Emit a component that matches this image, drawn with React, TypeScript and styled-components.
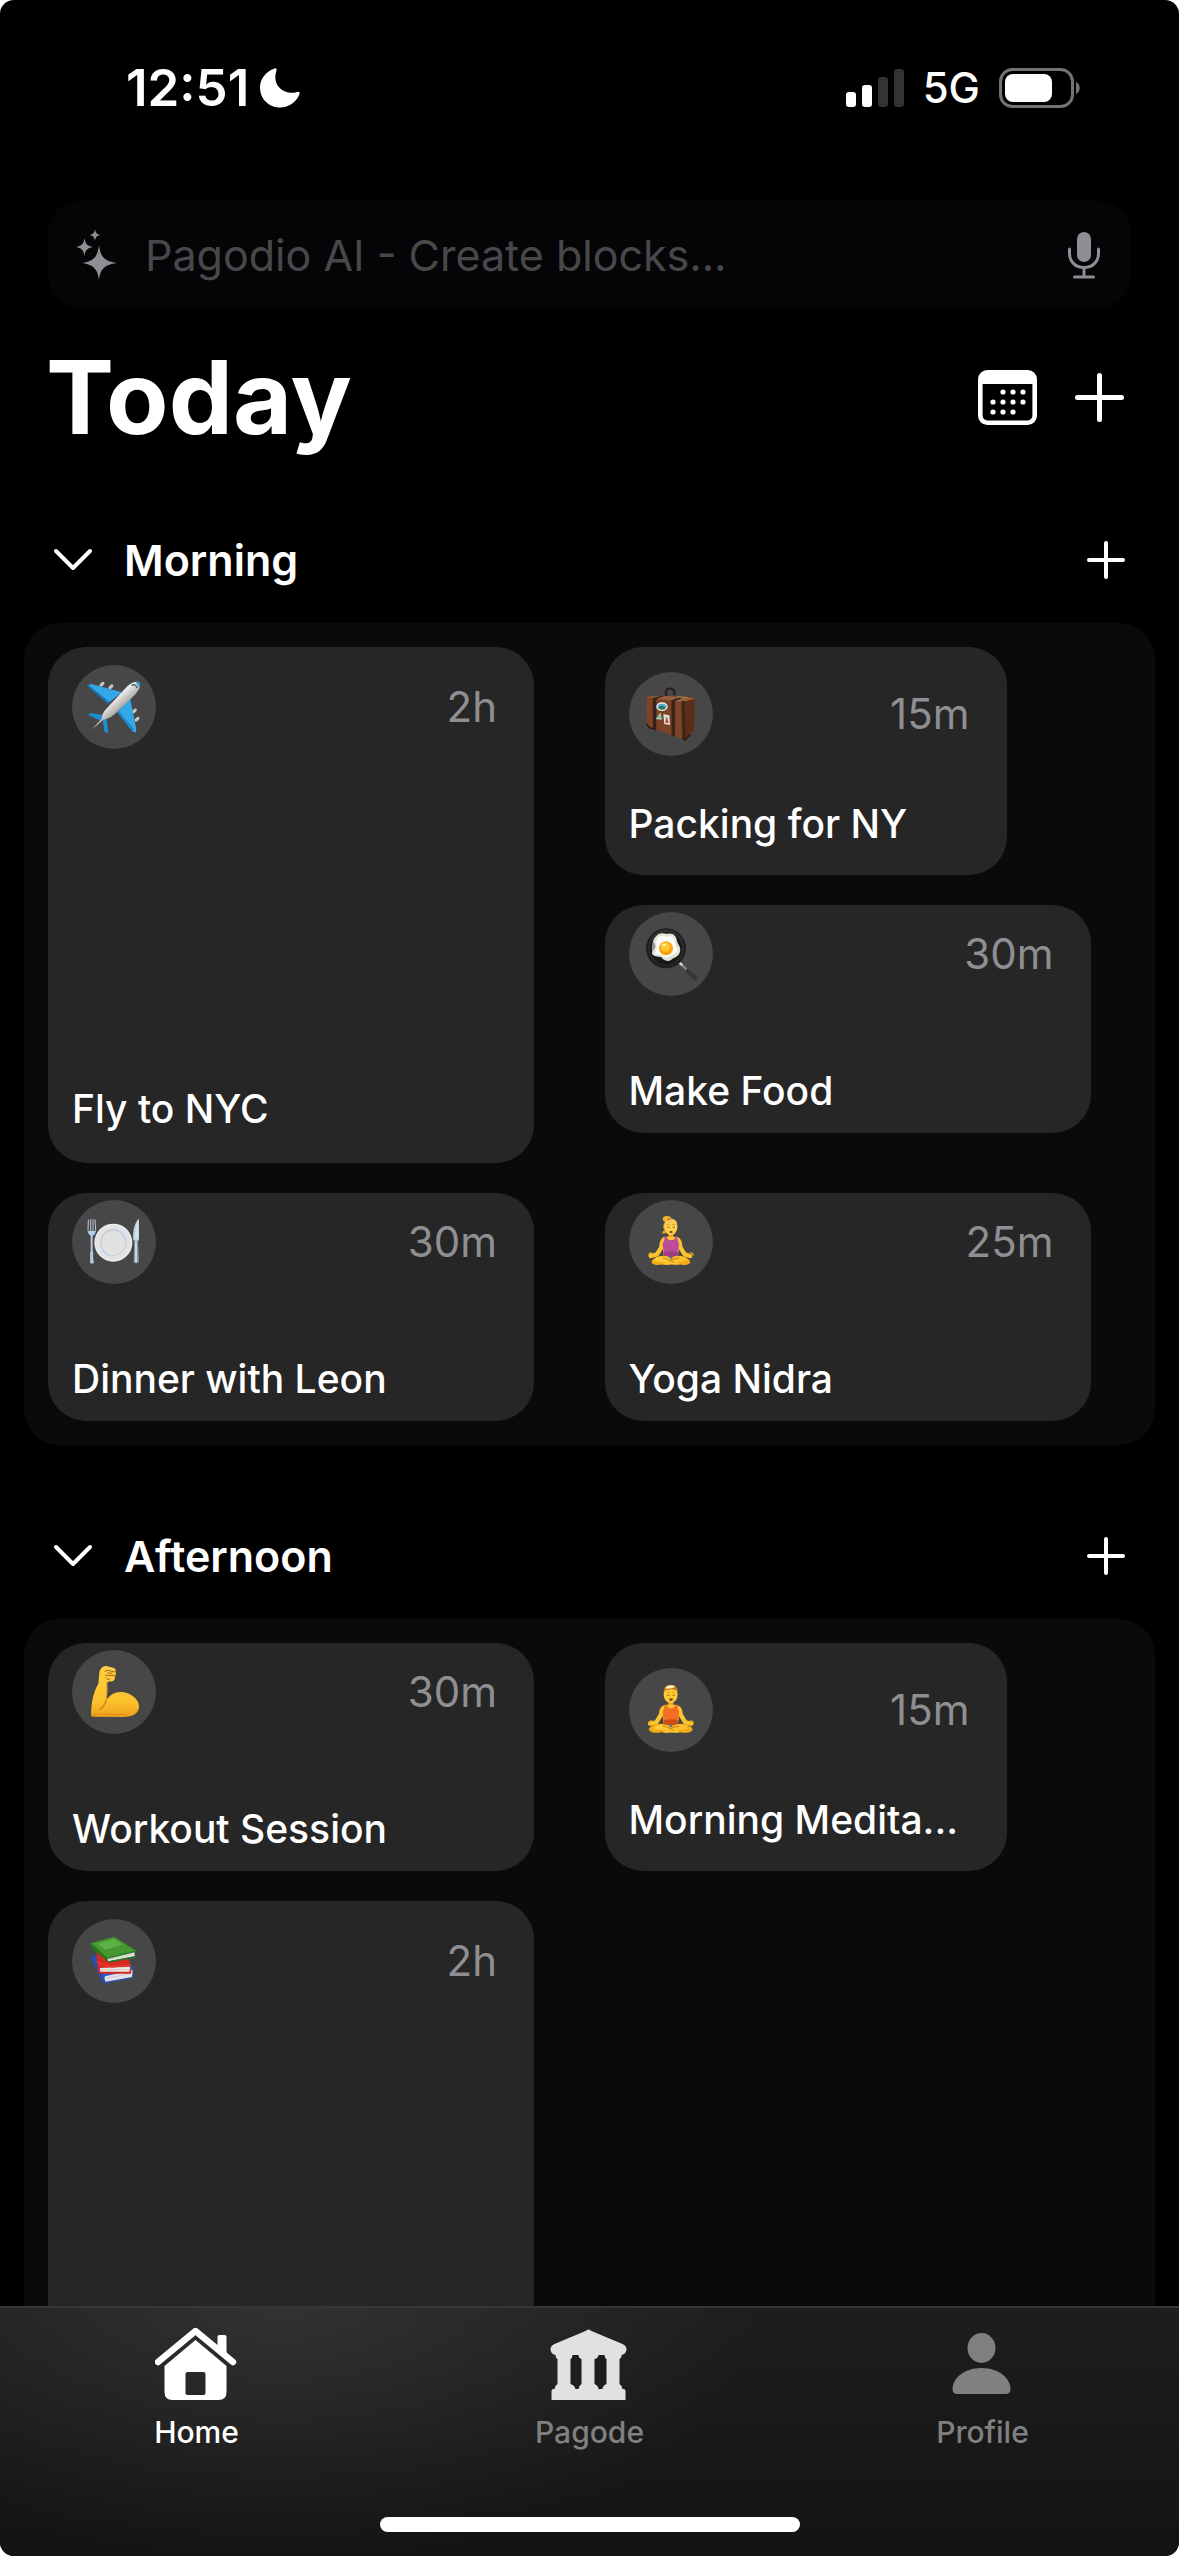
import React from "react";
import styled, { createGlobalStyle } from "styled-components";

const GlobalStyle = createGlobalStyle`
  *, *::before, *::after { box-sizing: border-box; }
  html, body { margin: 0; background: #fff; }
  body, button, input {
    font-family: Inter, "Liberation Sans", sans-serif;
    color: #fff;
  }
  h1, h2, h3, p { margin: 0; }
  button { padding: 0; border: 0; background: none; cursor: pointer; }
  svg { display: block; flex: none; }
`;

const Screen = styled.div`
  height: 100vh;
  display: flex;
  flex-direction: column;
  overflow: hidden;
  border-radius: 14px;
  background: #000;
`;

const StatusBar = styled.div`
  flex: none;
  height: 176px;
  padding: 0 98px 0 126px;
  display: flex;
  align-items: center;
  justify-content: space-between;
`;

const StatusGroup = styled.div<{ $gap: number }>`
  display: flex;
  align-items: center;
  gap: ${(p) => p.$gap}px;
`;

const Clock = styled.span`
  font-size: 51px;
  font-weight: 600;
  line-height: 60px;
`;

const Network = styled.span`
  font-size: 42px;
  font-weight: 500;
  line-height: 60px;
`;

const Content = styled.main`
  flex: 1;
  min-height: 0;
  overflow: auto;
  padding: 25px 24px 24px;
  scrollbar-width: none;
`;

const SearchField = styled.label`
  display: flex;
  align-items: center;
  height: 107px;
  margin: 0 24px;
  padding: 0 31px 0 27px;
  border-radius: 32px;
  background: #050507;
`;

const SearchInput = styled.input`
  flex: 1;
  min-width: 0;
  margin: 0 30px 0 26px;
  padding: 0;
  border: 0;
  outline: 0;
  background: none;
  font-size: 43px;
  line-height: 60px;
  &::placeholder { color: #48484a; opacity: 1; }
`;

const PageHeader = styled.header`
  display: flex;
  align-items: center;
  justify-content: space-between;
  height: 178px;
  margin-bottom: 11px;
  padding: 0 31px 0 22px;
`;

const PageTitle = styled.h1`
  font-size: 102px;
  font-weight: 700;
  line-height: 120px;
`;

const HeaderActions = styled.div`
  display: flex;
  align-items: center;
  gap: 38px;
`;

const Section = styled.section`
  & + & { margin-top: 48px; }
`;

const SectionHeader = styled.div`
  display: flex;
  align-items: center;
  justify-content: space-between;
  height: 126px;
  padding: 0 30px 0 28px;
`;

const SectionToggle = styled.button`
  display: flex;
  align-items: center;
  gap: 30px;
`;

const SectionTitle = styled.h2`
  font-size: 43px;
  font-weight: 600;
  line-height: 60px;
`;

const Panel = styled.div`
  display: grid;
  grid-template-columns: 1fr 1fr;
  gap: 30px;
  padding: 24px;
  border-radius: 36px;
  background: #0a0a0a;
`;

const Stack = styled.div`
  display: flex;
  flex-direction: column;
  gap: 30px;
`;

type Size = "short" | "medium" | "long";

const cardWidth = { short: 402, medium: 486, long: 486 };
const cardHeight = { short: 228, medium: 228, long: 516 };
const cardPadding = {
  short: "25px 37px 27px 24px",
  medium: "7px 37px 18px 24px",
  long: "18px 37px 30px 24px",
};

const Card = styled.article<{ $size: Size }>`
  display: flex;
  flex-direction: column;
  justify-content: space-between;
  width: 100%;
  max-width: ${(p) => cardWidth[p.$size]}px;
  height: ${(p) => cardHeight[p.$size]}px;
  padding: ${(p) => cardPadding[p.$size]};
  border-radius: 38px;
  background: #262626;
`;

const CardTop = styled.div`
  display: flex;
  align-items: center;
  justify-content: space-between;
`;

const Badge = styled.div`
  width: 84px;
  height: 84px;
  border-radius: 50%;
  background: #474747;
`;

const Duration = styled.span`
  font-size: 42px;
  line-height: 48px;
  color: #8e8e93;
`;

const CardTitle = styled.h3`
  font-size: 39px;
  font-weight: 500;
  line-height: 48px;
  white-space: nowrap;
`;

const TabBar = styled.nav`
  flex: none;
  display: flex;
  flex-direction: column;
  align-items: center;
  height: 250px;
  border-top: 2px solid #363636;
  background:
    radial-gradient(ellipse 480px 260px at 24% 0, rgba(255, 255, 255, 0.09), rgba(255, 255, 255, 0)),
    linear-gradient(#1e1e1e, #131313);
`;

const Tabs = styled.div`
  display: grid;
  grid-template-columns: repeat(3, 1fr);
  width: 100%;
`;

const Tab = styled.a<{ $active?: boolean }>`
  display: flex;
  flex-direction: column;
  align-items: center;
  gap: 10px;
  padding-top: 16px;
  font-size: 30px;
  font-weight: 500;
  line-height: 36px;
  text-decoration: none;
  color: ${(p) => (p.$active ? "#fff" : "#808080")};
`;

const HomeIndicator = styled.div`
  width: 420px;
  height: 15px;
  margin: auto 0 24px;
  border-radius: 8px;
  background: #fff;
`;

const Moon = () => (
  <svg width="42" height="42" viewBox="0 0 42 42" fill="#fff">
    <path d="M15.500 1.500C17 .8 18 2 17.500 3.400C15.500 8.500 15.800 16 20.500 20.800C25 25.500 32 27 38 25C39.800 24.400 41.200 25.300 40.500 27C37.500 35 30 40.500 21 40.500C10 40.500 1 32 1 20.500C1 12 7 4.500 15.500 1.500Z" />
  </svg>
);

const Signal = () => (
  <svg width="58" height="38" viewBox="0 0 58 38" fill="#fff">
    <rect x="0" y="23" width="10" height="15" rx="3" />
    <rect x="16" y="16" width="10" height="22" rx="3" />
    <g fill="#333">
      <rect x="32" y="8" width="10" height="30" rx="3" />
      <rect x="48" y="0" width="10" height="38" rx="3" />
    </g>
  </svg>
);

const Battery = () => (
  <svg width="82" height="40" viewBox="0 0 82 40">
    <rect x="1.500" y="1.500" width="72" height="37" rx="12" fill="none" stroke="#737373" strokeWidth="3" />
    <rect x="6" y="6" width="47" height="28" rx="8" fill="#fff" />
    <path d="M77 14C82 16 82 24 77 26Z" fill="#737373" />
  </svg>
);

const Sparkles = () => (
  <svg width="44" height="52" viewBox="0 0 44 52" fill="#8e8e93">
    <path d="M24 16C25.500 28 29 32 42 34C29 36 25.500 40 24 51C22.500 40 19 36 7 34C19 32 22.500 28 24 16Z" />
    <path d="M9.500 9C10.300 15 12.500 17 18 18C12.500 19 10.300 21 9.500 27C8.700 21 6.500 19 1 18C6.500 17 8.700 15 9.500 9Z" />
    <path d="M20 0C20.600 4 22 5.400 25.500 6C22 6.600 20.600 8 20 12C19.400 8 18 6.600 14.500 6C18 5.400 19.400 4 20 0Z" />
  </svg>
);

const Mic = () => (
  <svg width="32" height="48" viewBox="0 0 32 48" fill="none" stroke="#8e8e93" strokeWidth="3" strokeLinecap="round">
    <rect x="9" y="1" width="14" height="30" rx="7" fill="#8e8e93" stroke="none" />
    <path d="M1.500 18V22C1.500 31 7.500 36.500 16 36.500C24.500 36.500 30.500 31 30.500 22V18M16 37V46M6.500 46H25.500" />
  </svg>
);

const CalendarIcon = () => (
  <svg width="59" height="55" viewBox="0 0 59 55">
    <rect x="2.300" y="2.300" width="54.400" height="50.400" rx="7" fill="none" stroke="#fff" strokeWidth="4.600" />
    <path d="M2 8Q2 1 9 1H50Q57 1 57 8V14H2Z" fill="#fff" />
    <g fill="#fff">
      {[[25, 22], [35, 22], [45, 22], [15, 32], [25, 32], [35, 32], [45, 32], [15, 42], [25, 42], [35, 42]].map(
        ([x, y]) => (
          <circle key={`${x}-${y}`} cx={x} cy={y} r="2.600" />
        ),
      )}
    </g>
  </svg>
);

const Plus = ({ size, weight }: { size: number; weight: number }) => (
  <svg width={size} height={size} viewBox={`0 0 ${size} ${size}`} stroke="#fff" strokeWidth={weight} strokeLinecap="round">
    <path d={`M${size / 2} ${weight / 2}V${size - weight / 2}M${weight / 2} ${size / 2}H${size - weight / 2}`} />
  </svg>
);

const Chevron = () => (
  <svg width="42" height="24" viewBox="0 0 42 24" fill="none" stroke="#fff" strokeWidth="4" strokeLinecap="round" strokeLinejoin="round">
    <path d="M4 3L21 20L38 3" />
  </svg>
);

const HomeIcon = () => (
  <svg width="84" height="80" viewBox="1.500 0 84 80">
    <path d="M4.500 38L42 7L79.500 38" fill="none" stroke="#fff" strokeWidth="6.500" strokeLinecap="round" strokeLinejoin="round" />
    <path d="M64 27V13Q64 11 66 11H71Q73 11 73 13V32Z" fill="#fff" />
    <path fillRule="evenodd" d="M42 16L73 42V68Q73 76 65 76H19Q11 76 11 68V42ZM34 48Q32 48 32 50V69Q32 71 34 71H50Q52 71 52 69V50Q52 48 50 48Z" fill="#fff" />
  </svg>
);

const TempleIcon = () => (
  <svg width="84" height="80" viewBox="1.500 0 84 80" fill="#e1e1e1">
    <path d="M39 7Q42 4 45 7L76 20Q80 22 80 25Q80 30 75 31V33Q74 34 73 35V60Q76 62 76 65H77Q79 65 79 67V76H5V67Q5 65 7 65H8Q8 62 11 60V35Q9 34 9 31Q4 30 4 25Q4 22 8 20Z" />
    <path d="M26 31H32Q32 34 35 35V60Q32 62 32 65H29Q28 61 24 60V35Q26 34 26 31ZM52 31H58Q58 34 60 35V60Q56 62 56 65H52Q52 62 48 60V35Q52 34 52 31Z" fill="#1d1d1d" />
  </svg>
);

const ProfileIcon = () => (
  <svg width="84" height="80" viewBox="1.500 0 84 80" fill="#808080">
    <ellipse cx="42" cy="24" rx="14" ry="15" />
    <path d="M42 44C60 44 71 55 71 65Q71 70 66 70H18Q13 70 13 65C13 55 24 44 42 44Z" />
  </svg>
);

const Plane = () => (
  <svg viewBox="0 0 252 252">
    <defs>
      <linearGradient id="fuselage" gradientUnits="userSpaceOnUse" x1="125" y1="85" x2="158" y2="122">
        <stop offset="0.200" stopColor="#f7f7f7" />
        <stop offset="1" stopColor="#a9a4a2" />
      </linearGradient>
    </defs>
    <g fill="#c9c6c4">
      <ellipse cx="90" cy="58" rx="9" ry="5" transform="rotate(-42 90 58)" />
      <ellipse cx="117" cy="65" rx="9" ry="5" transform="rotate(-42 117 65)" />
      <ellipse cx="187" cy="138" rx="9" ry="5" transform="rotate(-42 187 138)" />
      <ellipse cx="195" cy="163" rx="9" ry="5" transform="rotate(-42 195 163)" />
    </g>
    <path d="M48 60L58 57L150 82L112 112Z" fill="#35a7e8" />
    <path d="M48 60L112 112L108 117L46 63Z" fill="#1177bd" />
    <path d="M174 98L193 192L191 203L181 199L136 142Z" fill="#35a7e8" />
    <path d="M181 199L136 142L141 138L185 192Z" fill="#1b86cc" />
    <path d="M48 149L56 144L96 151L86 167Z" fill="#1b8fd5" />
    <path d="M92 166L103 157L109 200L104 204L98 201Z" fill="#1b8fd5" />
    <path d="M59 194L90 160C90 146 98 136 108 126L166 64C178 52 198 46 203 54C207 62 200 78 188 90L128 148C117 157 105 163 94 164Z" fill="url(#fuselage)" />
    <path d="M191 51Q201 48 204 55Q205 62 202 67Z" fill="#1f9add" />
    <path d="M179 61Q190 55 196 69" fill="none" stroke="#4c5055" strokeWidth="4" />
  </svg>
);

const Suitcase = () => (
  <svg viewBox="0 0 252 252">
    <path d="M111 72V60Q111 50 123 50Q136 50 136 61V70" fill="none" stroke="#2d211d" strokeWidth="7" />
    <path d="M52 78Q53 72 61 71L190 76Q198 77 198 84L195 176L168 204L60 166Q53 163 53 156Z" fill="#7b4429" />
    <path d="M160 87L198 80L195 176L168 204Q163 200 163 194Z" fill="#5a2e1c" />
    <path d="M54 76Q80 70 114 72L198 79L160 91Z" fill="#96603e" />
    <path d="M71 78L82 80V174L72 170ZM127 84L138 86V194L128 190Z" fill="#3b2218" />
    <path d="M157 88L166 86L170 204L160 199Z" fill="#412418" />
    <path d="M71 78L100 71H108L82 81ZM127 85L158 75H166L138 87Z" fill="#2b211c" />
    <path d="M145 74L176 77" stroke="#b38a47" strokeWidth="3" />
    <path d="M53 155L60 166L80 173M160 199L168 204L184 188" fill="none" stroke="#34190f" strokeWidth="5" />
    <ellipse cx="99" cy="104" rx="17" ry="13" fill="#f0eee0" />
    <ellipse cx="99" cy="104" rx="13" ry="9" fill="#4ba7dc" />
    <path d="M88 108Q97 94 110 108Q99 117 88 108Z" fill="#3b7343" />
    <path d="M82 140L94 124L97 142Z" fill="#5cc6a4" stroke="#e4e3c8" strokeWidth="2" />
    <path d="M103 127L121 130L123 159L106 156Z" fill="#eee7d4" />
    <path d="M107 132L118 134L119 154L109 152Z" fill="#a3d4e5" />
    <path d="M113 135L119 153L109 152Z" fill="#cf3428" />
  </svg>
);

const Pan = () => (
  <svg viewBox="0 0 252 252">
    <path d="M150 150L181 181" stroke="#8e8586" strokeWidth="7" />
    <path d="M176 177L200 200" stroke="#39343a" strokeWidth="13" strokeLinecap="round" />
    <path d="M150 151L160 160" stroke="#e3e1e1" strokeWidth="6" />
    <circle cx="111" cy="109" r="60" fill="#1d1e1f" />
    <circle cx="111" cy="107" r="53" fill="#343636" />
    <circle cx="111" cy="109" r="49" fill="#171818" />
    <path d="M84 70C96 59 106 66 117 65C135 63 142 74 144 87C146 97 157 105 153 119C149 136 135 135 127 143C116 151 103 145 97 136C88 133 70 135 69 123C68 114 74 108 72 98C70 87 75 78 84 70Z" fill="#dfe4d6" />
    <path d="M72 86Q66 107 70 120Q76 111 80 103Z" fill="#9b9094" />
    <path d="M86 77Q98 67 113 74Q135 69 137 88Q138 103 147 111Q146 125 128 128Q113 144 98 130L77 125Q85 108 81 94Z" fill="#fcfdf8" />
    <circle cx="111" cy="109" r="21" fill="#f8a20f" />
    <circle cx="109" cy="105" r="14" fill="#ffc832" />
    <ellipse cx="105" cy="99" rx="6" ry="4" fill="#fff09a" />
  </svg>
);

const Plate = () => (
  <svg viewBox="0 0 252 252">
    <g fill="none" stroke="#bccbd8" strokeLinecap="round">
      <path d="M49 60L48 92Q50 105 59 106Q69 105 71 92L69 60M56 59V96M63 59V96" strokeWidth="3" />
      <path d="M59 104V180" strokeWidth="6" />
      <path d="M59 158V182" strokeWidth="9" />
    </g>
    <path d="M49 93H70Q69 106 60 109Q51 106 49 93Z" fill="#a9d0f0" />
    <circle cx="60" cy="185" r="6" fill="#a8c9ea" />
    <circle cx="124" cy="128" r="57" fill="#edeeef" />
    <circle cx="124" cy="128" r="53" fill="#e1e3e4" />
    <circle cx="124" cy="127" r="40" fill="#c7ced5" />
    <circle cx="124" cy="129" r="36" fill="#e2e2e2" />
    <path d="M88 137Q91 164 119 168M156 113Q150 97 136 92" fill="none" stroke="#b6d5f3" strokeWidth="4" />
    <path d="M201 57C188 66 182 91 183 118L190 127L201 121Z" fill="#b8cfdd" />
    <path d="M199 62Q190 76 188 118L198 116Z" fill="#d6e3ea" />
    <path d="M187 122H198L201 183Q200 190 192 190Q185 190 185 182Z" fill="#8297a8" />
    <path d="M192 124V187" stroke="#d3e5f3" strokeWidth="5" />
  </svg>
);

const YogaBody = ({ shirt, shade, wide }: { shirt: string; shade: string; wide?: boolean }) => (
  <g>
    <path d="M118 93H133V112H118Z" fill="#eda61c" />
    <g fill="none" stroke="#fbc42d" strokeLinecap="round" strokeLinejoin="round">
      <path d={wide ? "M106 119Q97 122 96 140L82 163L63 167" : "M107 117Q98 122 97 142L84 163L65 168"} strokeWidth="13" />
      <path d={wide ? "M145 119Q154 122 155 140L169 163L187 167" : "M144 117Q153 122 154 142L167 163L183 168"} strokeWidth="13" />
    </g>
    <path d="M106 112Q125 107 145 112L151 137L146 174H105L100 137Z" fill="#fbc42d" />
    <path d="M107 110L112 109Q115 121 126 121Q138 121 140 109L145 110Q145 124 150 130L146 172H105L101 130Q107 123 107 110Z" fill={shirt} />
    <path d="M104 157Q126 151 147 157L146 172H105Z" fill={shade} />
    <g fill="#f2aa16">
      <ellipse cx={wide ? 88 : 96} cy="181" rx="29" ry="13" transform={wide ? "rotate(-7 88 181)" : "rotate(-12 96 181)"} />
      <ellipse cx={wide ? 162 : 155} cy="181" rx="29" ry="13" transform={wide ? "rotate(7 162 181)" : "rotate(12 155 181)"} />
    </g>
    <path d="M82 172Q103 165 125 176L154 193Q129 198 108 187L74 184Z" fill="#ffca38" />
    <path d="M169 172Q147 164 126 176L98 193Q122 199 147 187L177 182Z" fill="#fcc12c" />
    <path d="M101 174Q115 175 134 187M150 174Q135 176 122 182" fill="none" stroke="#ca8114" strokeWidth="3" />
    <path d="M119 171H132L126 178Z" fill="#3b87a6" />
    <path d="M59 166Q61 158 69 159M184 159Q192 158 193 167" fill="none" stroke="#e9a51c" strokeWidth="4" />
  </g>
);

const YogaFace = () => (
  <g>
    <path d="M114 81Q118 84 122 81M130 81Q134 84 138 81" fill="none" stroke="#a16b16" strokeWidth="3" />
    <path d="M114 74L121 73M130 73L137 74" stroke="#ba811d" strokeWidth="2" />
    <ellipse cx="126" cy="96" rx="5" ry="3" fill="#77431b" />
  </g>
);

const YogaWoman = () => (
  <svg viewBox="0 0 252 252">
    <YogaBody shirt="#bc4d9a" shade="#9f3c85" />
    <ellipse cx="114" cy="57" rx="13" ry="9" fill="#efb52b" />
    <path d="M112 63Q96 79 107 91Q96 96 101 101Q114 101 119 95L132 70Z" fill="#e5a31f" />
    <ellipse cx="126" cy="81" rx="19" ry="24" fill="#ffd04a" />
    <path d="M106 82Q103 57 125 56Q148 55 145 86Q140 77 134 69Q122 78 107 82Z" fill="#f6cd52" />
    <path d="M115 60L124 56" stroke="#d94b64" strokeWidth="4" />
    <YogaFace />
  </svg>
);

const YogaMan = () => (
  <svg viewBox="0 0 252 252">
    <YogaBody shirt="#f16e24" shade="#ce4e17" wide />
    <ellipse cx="125" cy="79" rx="21" ry="26" fill="#ffc934" />
    <path d="M104 76Q101 51 125 50Q149 50 146 78L142 67Q132 65 128 62Q120 68 108 66Z" fill="#bd7d26" />
    <path d="M111 57Q123 47 139 56L129 60Q120 63 111 62Z" fill="#fff0bd" />
    <YogaFace />
    <path d="M119 94Q126 88 133 94" fill="none" stroke="#9b641a" strokeWidth="3" />
  </svg>
);

const Biceps = () => (
  <svg viewBox="0 0 252 252">
    <defs>
      <linearGradient id="skin" x1="0" y1="0" x2="0" y2="1">
        <stop offset="0" stopColor="#ffd044" />
        <stop offset="0.700" stopColor="#fcc22d" />
        <stop offset="1" stopColor="#eca11a" />
      </linearGradient>
    </defs>
    <path d="M82 68C84 56 93 47 103 48L126 54Q133 58 131 65Q134 71 130 76L128 88Q124 97 112 94L105 98Q107 127 103 151C113 133 131 125 149 126C177 128 201 148 201 169C202 190 182 201 153 201L64 200Q57 200 57 194C58 166 61 131 79 101Z" fill="url(#skin)" />
    <path d="M103 151Q96 172 83 179" fill="none" stroke="#c98518" strokeWidth="4" />
    <path d="M103 151Q106 127 105 99" fill="none" stroke="#db951c" strokeWidth="3" />
    <path d="M99 64L107 61L130 66M101 76L129 77M101 84Q105 91 113 88M107 69L121 70" fill="none" stroke="#a96b16" strokeWidth="3" strokeLinecap="round" />
    <path d="M57 196Q80 190 103 192T164 194" fill="none" stroke="#db8d18" strokeWidth="3" />
  </svg>
);

const Books = () => (
  <svg viewBox="0 0 252 252">
    <path d="M55 117L61 108L170 132L184 142L183 177L99 194Q91 190 87 181Z" fill="#2850aa" />
    <path d="M100 169L182 152L180 174L101 188Q95 178 100 169Z" fill="#e4e3ea" />
    <path d="M101 178L181 163" stroke="#bbbccc" strokeWidth="2" />
    <path d="M92 171L182 151" stroke="#3564ca" strokeWidth="5" />
    <path d="M76 92Q70 96 74 105L78 158Q79 164 87 164H176L178 158L166 98Z" fill="#d82820" />
    <path d="M84 147L174 143L173 158H85Z" fill="#eae6e2" />
    <path d="M83 152H174" stroke="#c9c3c0" strokeWidth="2" />
    <path d="M75 126Q91 143 123 143L177 138" fill="none" stroke="#e23a2f" strokeWidth="5" />
    <path d="M56 73L126 53L194 96L109 119Z" fill="#43992f" />
    <path d="M56 73Q54 79 58 87L108 128L190 115L186 97L109 119Z" fill="#247820" />
    <path d="M113 115L187 97L188 111L109 127Q104 119 113 115Z" fill="#eaeae2" />
    <path d="M111 122L187 104" stroke="#bbbfae" strokeWidth="2" />
    <path d="M109 129L191 114M109 117L194 96" stroke="#257929" strokeWidth="4" />
    <path d="M75 74L125 59L151 76L100 93Z" fill="#5cb048" />
  </svg>
);

interface Block {
  title?: string;
  time: string;
  size: Size;
  icon: React.ReactNode;
}

const BlockCard = ({ title, time, size, icon }: Block) => (
  <Card $size={size}>
    <CardTop>
      <Badge>{icon}</Badge>
      <Duration>{time}</Duration>
    </CardTop>
    {title && <CardTitle>{title}</CardTitle>}
  </Card>
);

const DaySection = ({ title, children }: { title: string; children: React.ReactNode }) => (
  <Section>
    <SectionHeader>
      <SectionToggle type="button" aria-expanded="true">
        <Chevron />
        <SectionTitle>{title}</SectionTitle>
      </SectionToggle>
      <button type="button" aria-label={`Add to ${title}`}>
        <Plus size={38} weight={4} />
      </button>
    </SectionHeader>
    <Panel>{children}</Panel>
  </Section>
);

export default function App() {
  return (
    <>
      <GlobalStyle />
      <Screen>
        <StatusBar>
          <StatusGroup $gap={10}>
            <Clock>12:51</Clock>
            <Moon />
          </StatusGroup>
          <StatusGroup $gap={19}>
            <Signal />
            <Network>5G</Network>
            <Battery />
          </StatusGroup>
        </StatusBar>
        <Content>
          <SearchField>
            <Sparkles />
            <SearchInput type="text" aria-label="Pagodio AI" placeholder="Pagodio AI - Create blocks..." />
            <button type="button" aria-label="Dictate">
              <Mic />
            </button>
          </SearchField>
          <PageHeader>
            <PageTitle>Today</PageTitle>
            <HeaderActions>
              <button type="button" aria-label="Calendar">
                <CalendarIcon />
              </button>
              <button type="button" aria-label="Add block">
                <Plus size={49} weight={5} />
              </button>
            </HeaderActions>
          </PageHeader>
          <DaySection title="Morning">
            <BlockCard title="Fly to NYC" time="2h" size="long" icon={<Plane />} />
            <Stack>
              <BlockCard title="Packing for NY" time="15m" size="short" icon={<Suitcase />} />
              <BlockCard title="Make Food" time="30m" size="medium" icon={<Pan />} />
            </Stack>
            <BlockCard title="Dinner with Leon" time="30m" size="medium" icon={<Plate />} />
            <BlockCard title="Yoga Nidra" time="25m" size="medium" icon={<YogaWoman />} />
          </DaySection>
          <DaySection title="Afternoon">
            <BlockCard title="Workout Session" time="30m" size="medium" icon={<Biceps />} />
            <BlockCard title="Morning Medita..." time="15m" size="short" icon={<YogaMan />} />
            <BlockCard time="2h" size="long" icon={<Books />} />
          </DaySection>
        </Content>
        <TabBar>
          <Tabs>
            <Tab href="#home" $active aria-current="page">
              <HomeIcon />
              Home
            </Tab>
            <Tab href="#pagode">
              <TempleIcon />
              Pagode
            </Tab>
            <Tab href="#profile">
              <ProfileIcon />
              Profile
            </Tab>
          </Tabs>
          <HomeIndicator />
        </TabBar>
      </Screen>
    </>
  );
}
